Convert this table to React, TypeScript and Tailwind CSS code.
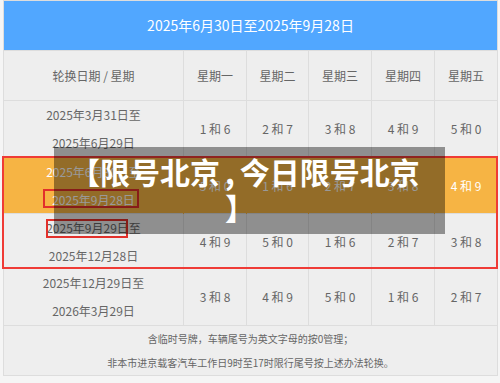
import React from "react";

const rows = [
  { from: "2025年3月31日至", to: "2025年6月29日", nums: ["1 和 6", "2 和 7", "3 和 8", "4 和 9", "5 和 0"], h: "h-[57px]", hot: false },
  { from: "2025年6月30日至", to: "2025年9月28日", nums: ["5 和 0", "1 和 6", "2 和 7", "3 和 8", "4 和 9"], h: "h-[56px]", hot: true },
  { from: "2025年9月29日至", to: "2025年12月28日", nums: ["4 和 9", "5 和 0", "1 和 6", "2 和 7", "3 和 8"], h: "h-[55px]", hot: false },
  { from: "2025年12月29日至", to: "2026年3月29日", nums: ["3 和 8", "4 和 9", "5 和 0", "1 和 6", "2 和 7"], h: "h-[57px]", hot: false },
];

const days = ["星期一", "星期二", "星期三", "星期四", "星期五"];

const cols = "grid grid-cols-[179px_63px_62px_63px_63px_63px]";

export default function App() {
  return (
    <div
      className="relative w-[500px] h-[383px] overflow-hidden bg-[#f5f5f5] text-[#666]"
      style={{ fontFamily: '"Noto Sans CJK SC", "Noto Sans", sans-serif' }}
    >
      <div className="ml-[3px] w-[495px] border border-[#ddd] bg-[#eee]">
        <div className="flex h-[49px] items-center justify-center bg-[#51a7ff] text-[14px] text-white">
          2025年6月30日至2025年9月28日
        </div>

        <div className={`${cols} h-[50px] border-t border-[#ddd] text-[12px]`}>
          <div className="flex items-center justify-center">轮换日期 / 星期</div>
          {days.map((d) => (
            <div key={d} className="flex items-center justify-center border-l border-[#ddd]">
              {d}
            </div>
          ))}
        </div>

        {rows.map((r) => (
          <div
            key={r.from}
            className={`${cols} ${r.h} border-t text-[12px] ${
              r.hot ? "border-[#f6b444] bg-[#f6b444] text-white" : "border-[#ddd]"
            }`}
          >
            <div className="flex flex-col items-center justify-center leading-[28px]">
              <span>{r.from}</span>
              <span>{r.to}</span>
            </div>
            {r.nums.map((n, i) => (
              <div
                key={i}
                className={`flex items-center justify-center border-l ${
                  r.hot ? "border-[#f6b444]" : "border-[#ddd]"
                }`}
              >
                {n}
              </div>
            ))}
          </div>
        ))}

        <div className="flex h-[50px] flex-col items-center justify-center border-t border-[#ddd] text-[10px] leading-[24px]">
          <span>含临时号牌，车辆尾号为英文字母的按0管理；</span>
          <span>非本市进京载客汽车工作日9时至17时限行尾号按上述办法轮换。</span>
        </div>
      </div>

      {/* red annotations */}
      <div className="absolute left-[2px] top-[156px] h-[113px] w-[496px] border-2 border-[#ef3b36]" />
      <div className="absolute left-[43px] top-[189px] h-[19px] w-[96px] border-2 border-[#e2302b]" />
      <div className="absolute left-[46px] top-[219px] h-[19px] w-[82px] border-2 border-[#e2302b]" />

      {/* caption overlay */}
      <div className="absolute left-[54px] top-[147px] h-[87px] w-[391px] bg-black/40 pt-[6px] text-[30px] font-bold leading-[36px] text-white">
        <div className="whitespace-nowrap pl-4">
          【限号北京<span className="ml-[5px] mr-[5px]">,</span>今日限号北京
        </div>
        <div className="pl-[171px]">】</div>
      </div>
    </div>
  );
}
